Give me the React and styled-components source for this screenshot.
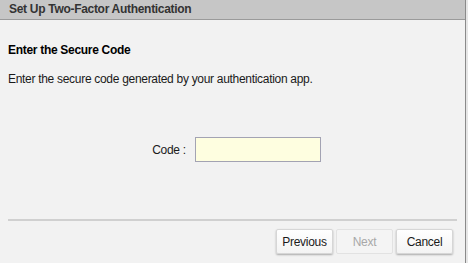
import React from "react";
import styled, { createGlobalStyle } from "styled-components";

const GlobalStyle = createGlobalStyle`
  html, body {
    margin: 0;
    padding: 0;
    background: #e6e6e6;
    font-family: "Liberation Sans", Arial, Helvetica, sans-serif;
  }
`;

const App = () => {
  return (
    <>
      <GlobalStyle />
      <Dialog>
        <Header>Set Up Two-Factor Authentication</Header>
        <Body>
          <Title>Enter the Secure Code</Title>
          <Text>Enter the secure code generated by your authentication app.</Text>
          <CodeRow>
            <Label htmlFor="code">Code :</Label>
            <Input id="code" type="text" />
          </CodeRow>
          <Divider />
          <ButtonBar>
            <Button>Previous</Button>
            <Button disabled>Next</Button>
            <Button>Cancel</Button>
          </ButtonBar>
        </Body>
      </Dialog>
    </>
  );
};

const Dialog = styled.div`
  width: 465px;
  height: 263px;
  background: #f2f2f2;
  border-right: 1px solid #8a8a8a;
  display: flex;
  flex-direction: column;
  overflow: hidden;
  letter-spacing: -0.3px;
`;

const Header = styled.div`
  height: 19px;
  line-height: 18px;
  padding: 0 9px;
  background: #c6c6c6;
  border-bottom: 1px solid #9a9a9a;
  color: #333333;
  font-size: 12px;
  font-weight: bold;
`;

const Body = styled.div`
  display: flex;
  flex-direction: column;
  padding: 0 8px;
`;

const Title = styled.div`
  margin-top: 23px;
  line-height: 14px;
  font-size: 12px;
  font-weight: bold;
  color: #000000;
`;

const Text = styled.div`
  margin-top: 15px;
  line-height: 14px;
  font-size: 12px;
  color: #1a1a1a;
`;

const CodeRow = styled.div`
  display: flex;
  align-items: center;
  justify-content: center;
  gap: 9px;
  margin-top: 51px;
  padding-left: 8px;
`;

const Label = styled.label`
  font-size: 12px;
  color: #1a1a1a;
`;

const Input = styled.input`
  box-sizing: border-box;
  width: 126px;
  height: 25px;
  margin: 0;
  background: #fefee0;
  border: 1px solid #a3a3b3;
  outline: none;
`;

const Divider = styled.div`
  margin-top: 57px;
  height: 2px;
  background: #d0d0d0;
  width: 449px;
`;

const ButtonBar = styled.div`
  display: flex;
  justify-content: flex-end;
  gap: 3px;
  margin-top: 8px;
  padding-right: 4px;
`;

const Button = styled.button`
  box-sizing: border-box;
  width: 57px;
  height: 25px;
  padding: 0;
  font-family: "Liberation Sans", Arial, Helvetica, sans-serif;
  font-size: 12px;
  letter-spacing: -0.3px;
  color: #1a1a1a;
  background: linear-gradient(#ffffff, #f3f3f3);
  border: 1px solid #d6d6d6;
  border-radius: 2px;
  box-shadow: 0 1px 2px rgba(0, 0, 0, 0.3);
  &:disabled {
    color: #a8a8a8;
    background: #f4f4f4;
    border-color: #e2e2e2;
    box-shadow: none;
  }
`;

export default App;
